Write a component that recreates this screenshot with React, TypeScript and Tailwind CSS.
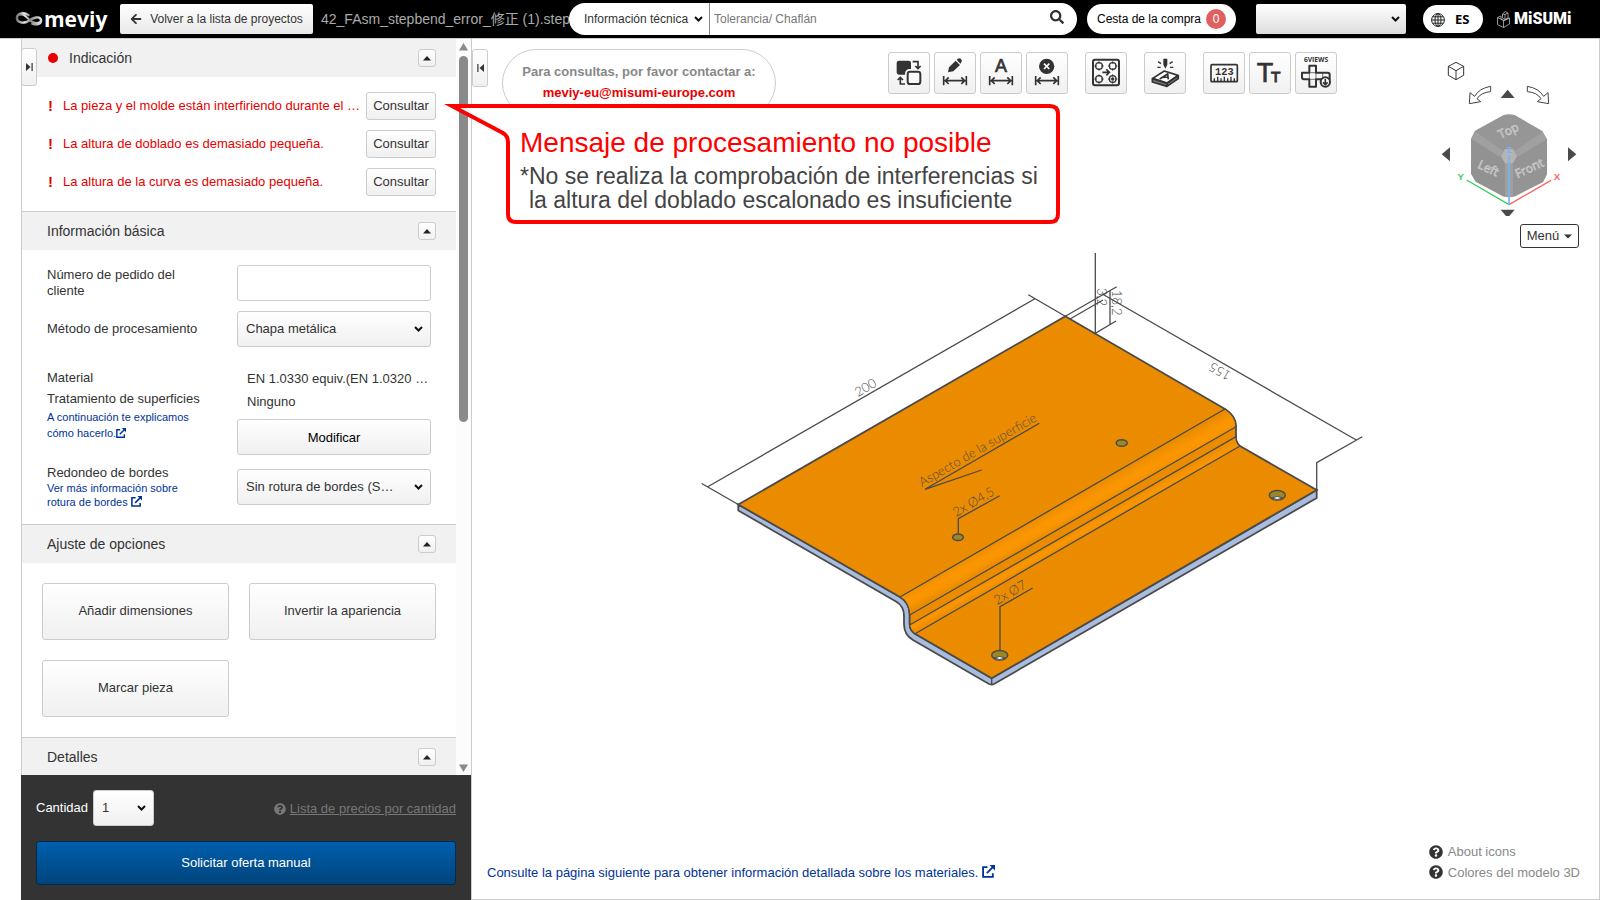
import type { ReactNode } from 'react';
import { FaArrowLeft, FaQuestionCircle, FaSearch } from 'react-icons/fa';

const buttonFace = 'rounded-[3px] border border-[#ccc] bg-linear-to-b from-white to-[#f0f0f0]';

const errors = [
  'La pieza y el molde están interfiriendo durante el …',
  'La altura de doblado es demasiado pequeña.',
  'La altura de la curva es demasiado pequeña.',
];

export default function App() {
  return (
    <div className="relative flex h-screen flex-col overflow-hidden bg-white font-['Liberation_Sans','Noto_Sans_CJK_JP',sans-serif] text-[13px] text-[#333]">
      <Header />
      <div className="flex min-h-0 flex-1 pl-[21px]">
        <Sidebar />
        <Viewer />
      </div>
      <Callout />
    </div>
  );
}

function Header() {
  return (
    <header className="flex h-[39px] shrink-0 items-center border-b border-[#ccc] bg-black pr-7 pl-[15px] text-xs">
      <a href="#" aria-label="meviy" className="flex w-[105px] shrink-0 items-center gap-px text-white">
        <svg className="shrink-0" width="28" height="16" viewBox="0 0 29 16" fill="none">
          <defs>
            <linearGradient id="loop" x1="0" x2="1">
              <stop offset="0" stopColor="#777" />
              <stop offset="0.3" stopColor="#eee" />
              <stop offset="0.55" stopColor="#888" />
              <stop offset="1" stopColor="#ddd" />
            </linearGradient>
          </defs>
          <path d="M14 4 C10 1 2 1 2 7 C2 12 9 13 14 10 C18 7 26 4 27 9 C27 14 22 14 18 13" stroke="url(#loop)" strokeWidth="2.500" strokeLinecap="round" />
          <path d="M4 4 C9 2 12 6 15 9 C18 12 23 13 26 11" stroke="url(#loop)" strokeWidth="2" />
        </svg>
        <span className="font-['Open_Sans',sans-serif] text-[21px] leading-6 font-bold">meviy</span>
      </a>
      <button className="flex h-[30px] w-[193px] shrink-0 items-center justify-center gap-2 rounded-xs bg-linear-to-b from-white to-[#e8e8e8]">
        <FaArrowLeft size={12} />
        Volver a la lista de proyectos
      </button>
      <h1 className="ml-2 w-[248px] shrink-0 overflow-hidden text-[14px] whitespace-nowrap text-[#aaa]">42_FAsm_stepbend_error_修正 (1).step</h1>
      <form className="flex h-8 min-w-0 flex-1 items-center rounded-full bg-white">
        <div className="relative flex h-full w-[141px] shrink-0 items-center border-r border-[#888]">
          <select aria-label="Categoría" className="h-full w-full appearance-none rounded-l-full bg-transparent pl-[15px] outline-none">
            <option>Información técnica</option>
          </select>
          <Chevron className="right-[6px]" />
        </div>
        <input aria-label="Buscar" placeholder="Tolerancia/ Chaflán" className="h-full min-w-0 flex-1 pl-1 outline-none placeholder:text-[#777]" />
        <button type="button" aria-label="Buscar" className="mr-3 mb-1 p-px">
          <FaSearch size={14} />
        </button>
      </form>
      <button className="ml-[10px] flex h-[30px] w-[149px] shrink-0 items-center justify-center gap-[5px] rounded-full bg-white text-black">
        Cesta de la compra
        <span className="flex size-5 items-center justify-center rounded-full bg-[#e06060] text-white">0</span>
      </button>
      <div className="relative ml-5 flex h-[30px] w-[150px] shrink-0 items-center rounded-xs bg-linear-to-b from-white to-[#ddd]">
        <select aria-label="Usuario" className="h-full w-full appearance-none bg-transparent outline-none">
          <option></option>
        </select>
        <Chevron className="right-[6px]" />
      </div>
      <button className="ml-[17px] flex h-7 w-[60px] shrink-0 items-center gap-[10px] rounded-full bg-white pt-px pl-2 font-['Open_Sans',sans-serif] text-[13px] font-bold text-black">
        <svg width="14" height="14" viewBox="0 0 14 14" fill="none" stroke="#222">
          <circle cx="7" cy="7" r="6.4" />
          <ellipse cx="7" cy="7" rx="3" ry="6.4" />
          <path d="M7 .6v12.8M.6 7h12.8M1.6 3.8h10.8M1.6 10.2h10.8" />
        </svg>
        ES
      </button>
      <a href="#" aria-label="MiSUMi" className="ml-[14px] flex w-[75px] shrink-0 items-center gap-1 text-white">
        <svg className="shrink-0" width="13" height="17" viewBox="0 0 13 17" fill="none" stroke="#bbb" strokeWidth="0.8">
          <path d="M.5 6.5 4 5v3l3 1.5 5.5-2.5v6L6.500 16.500.5 13.500zM.5 6.500l6 3v7M6.500 9.500 12.500 7M5.500 3 8.500.5l2.500 1.500v5L8 8.500V3.500L11 2M5.500 3v4L8 8.500M5.500 3 8 3.500" />
        </svg>
        <span className="font-[Roboto,sans-serif] text-[16px] leading-5 font-black">MiSUMi</span>
      </a>
    </header>
  );
}

function Sidebar() {
  return (
    <aside className="flex w-[450px] shrink-0 flex-col">
      <div className="relative flex min-h-0 flex-1 overflow-hidden border-l border-[#ccc]">
        <button aria-label="Ocultar panel" className={`${buttonFace} absolute top-[9px] -left-px flex h-[38px] w-4 items-center justify-center`}>
          <svg width="7" height="8" viewBox="0 0 7 8" fill="#333"><path d="M0 0 4.500 4 0 8zM5.500 0h1.200v8H5.500z" /></svg>
        </button>
        <div className="min-w-0 flex-1">
          <SectionTitle first>
            <span className="size-[10px] rounded-full bg-[#e60000]" />
            Indicación
          </SectionTitle>
          <ul className="flex flex-col gap-[10px] py-[15px] pr-5 pl-[26px]">
            {errors.map((message) => (
              <li key={message} className="flex h-7 items-center justify-between text-[#e60000]">
                <span className="flex items-center">
                  <span className="w-[15px] text-[15px] font-bold">!</span>
                  {message}
                </span>
                <button className={`${buttonFace} h-7 w-[70px] text-[#333]`}>Consultar</button>
              </li>
            ))}
          </ul>

          <SectionTitle>Información básica</SectionTitle>
          <div className="px-[25px] py-[15px]">
            <div className="flex h-9 items-center">
              <label htmlFor="order" className="w-[190px] shrink-0 pr-10 leading-4">Número de pedido del cliente</label>
              <input id="order" className="h-9 min-w-0 flex-1 rounded-[3px] border border-[#ccc] px-2" />
            </div>
            <div className="mt-[10px] flex h-9 items-center">
              <label htmlFor="method" className="w-[190px] shrink-0">Método de procesamiento</label>
              <Select id="method" value="Chapa metálica" />
            </div>
            <div className="mt-5 flex">
              <div className="w-[190px] shrink-0 leading-[21px]">
                <p>Material</p>
                <p>Tratamiento de superficies</p>
                <a href="#" className="block w-[150px] text-[11px] leading-4 text-[#039]">
                  A continuación te explicamos cómo hacerlo.<ExternalIcon size={10} />
                </a>
              </div>
              <div className="min-w-0 flex-1 leading-[23px]">
                <p className="pl-[10px] whitespace-nowrap">EN 1.0330 equiv.(EN 1.0320 …</p>
                <p className="pl-[10px]">Ninguno</p>
                <button className={`${buttonFace} mt-[6px] h-9 w-full text-black`}>Modificar</button>
              </div>
            </div>
            <div className="mt-[10px] flex items-center">
              <div className="w-[190px] shrink-0">
                <label htmlFor="edges" className="block leading-4">Redondeo de bordes</label>
                <a href="#" className="block w-[140px] text-[11px] leading-[14px] text-[#039]">
                  Ver más información sobre rotura de bordes <ExternalIcon size={11} />
                </a>
              </div>
              <Select id="edges" value="Sin rotura de bordes (S…" />
            </div>
          </div>

          <SectionTitle>Ajuste de opciones</SectionTitle>
          <div className="grid grid-cols-2 gap-5 p-5">
            {['Añadir dimensiones', 'Invertir la apariencia', 'Marcar pieza'].map((label) => (
              <button key={label} className={`${buttonFace} h-[57px] pb-px`}>{label}</button>
            ))}
          </div>

          <SectionTitle>Detalles</SectionTitle>
        </div>
        <div className="flex w-[15px] shrink-0 flex-col items-center bg-[#fcfcfc] pt-1 pb-[3px]">
          <svg width="9" height="8" viewBox="0 0 9 8" fill="#8a8a8a"><path d="M4.500 0 9 7.500H0z" /></svg>
          <div className="mt-[5px] h-[366px] w-[9px] rounded-full bg-[#8a8a8a]" />
          <svg className="mt-auto" width="9" height="8" viewBox="0 0 9 8" fill="#8a8a8a"><path d="M4.500 8 9 .5H0z" /></svg>
        </div>
      </div>

      <div className="bg-[#333] p-[15px] text-white">
        <div className="flex items-center">
          <label htmlFor="quantity" className="mr-[5px]">Cantidad</label>
          <div className="flex w-[61px]">
            <Select id="quantity" value="1" />
          </div>
          <a href="#" className="ml-auto flex items-center gap-1 pt-px text-[#777]">
            <FaQuestionCircle size={12} />
            <span className="underline">Lista de precios por cantidad</span>
          </a>
        </div>
        <button className="mt-[15px] block h-11 w-full rounded-[3px] border border-[#002b50] bg-linear-to-b from-[#005fae] to-[#00447c]">Solicitar oferta manual</button>
      </div>
    </aside>
  );
}

function SectionTitle({ children, first = false }: { children: ReactNode; first?: boolean }) {
  return (
    <div className={`flex items-center bg-[#f1f1f1] pr-5 text-sm ${first ? 'h-[38px] gap-[11px] pl-[26px]' : 'h-[39px] border-t border-[#ccc] pl-[25px]'}`}>
      {children}
      <button aria-label="Plegar" className={`${buttonFace} ml-auto flex size-[18px] items-center justify-center`}>
        <svg width="8" height="5" viewBox="0 0 8 5" fill="#222"><path d="M4 0 8 4.500H0z" /></svg>
      </button>
    </div>
  );
}

function Select({ id, value }: { id: string; value: string }) {
  return (
    <div className="relative flex h-9 min-w-0 flex-1 items-center">
      <select id={id} className={`${buttonFace} h-full w-full appearance-none pr-8 pl-2 text-[#333] outline-none`}>
        <option>{value}</option>
      </select>
      <Chevron className="right-2" />
    </div>
  );
}

function Chevron({ className }: { className: string }) {
  return (
    <svg className={`pointer-events-none absolute ${className}`} width="9" height="6" viewBox="0 0 9 6" fill="none" stroke="#111" strokeWidth="2">
      <path d="m1 1 3.500 3.500L8 1" />
    </svg>
  );
}

function ExternalIcon({ size }: { size: number }) {
  return (
    <svg className="inline align-[-1px]" width={size} height={size} viewBox="0 0 12 12" fill="none" stroke="#039" strokeWidth="1.700">
      <path d="M5 2H1v9h9V7.500M4.500 7.500 10.500 1.500" />
      <path d="M7 0h5v5z" fill="#039" stroke="none" />
    </svg>
  );
}

function Viewer() {
  return (
    <main className="relative min-w-0 flex-1 border-r border-b border-l border-[#ccc]">
      <Model />
      <div className="relative flex h-full flex-col justify-between">
        <div className="flex items-start">
          <button aria-label="Mostrar panel" className={`${buttonFace} mt-[10px] flex h-[38px] w-4 items-center justify-center`}>
            <svg width="7" height="8" viewBox="0 0 7 8" fill="#333"><path d="M7 0 2.500 4 7 8zM.3 0h1.200v8H.3z" /></svg>
          </button>
          <div className="mt-[10px] ml-[14px] h-[68px] w-[274px] rounded-full border border-[#ccc] pt-[11px] text-center leading-[21px] font-bold">
            <p className="text-[#888]">Para consultas, por favor contactar a:</p>
            <a href="mailto:meviy-eu@misumi-europe.com" className="text-[#e60000]">meviy-eu@misumi-europe.com</a>
          </div>
          <Toolbar />
          <ViewCube />
        </div>
        <div className="flex items-end justify-between pr-[19px] pb-[17px] pl-[15px]">
          <a href="#" className="text-[#039]">
            Consulte la página siguiente para obtener información detallada sobre los materiales. <ExternalIcon size={13} />
          </a>
          <div className="flex flex-col gap-px text-[#888]">
            <a href="#" className="flex items-center gap-[5px]"><FaQuestionCircle size={14} color="#333" />About icons</a>
            <a href="#" className="flex items-center gap-[5px]"><FaQuestionCircle size={14} color="#333" />Colores del modelo 3D</a>
          </div>
        </div>
      </div>
    </main>
  );
}

function Tool({ label, children, gap = false }: { label: string; children: ReactNode; gap?: boolean }) {
  return (
    <button aria-label={label} className={`${buttonFace} size-[42px] ${gap ? 'ml-[13px]' : ''}`}>
      <svg width="40" height="40" viewBox="3 3 120 120" fill="none" stroke="#333" strokeWidth="6">{children}</svg>
    </button>
  );
}

function DimensionArrow() {
  return <path d="M29 72v28M97 72v28M34 86h58M44 76 34 86l10 10M82 76l10 10-10 10" strokeWidth="5" />;
}

function Toolbar() {
  return (
    <div className="mt-[13px] ml-[112px] flex gap-1">
      <Tool label="Cambiar visualización">
        <rect x="26" y="26" width="43" height="42" rx="7" fill="#333" stroke="none" />
        <rect x="58" y="58" width="40" height="39" rx="7" stroke="#f8f8f8" strokeWidth="14" />
        <rect x="59" y="59" width="38" height="37" rx="7" fill="#fafafa" />
        <path d="M74 29h16v20M82 42l8 8 8-8M51 96H37V77M29 84l8-8 8 8" strokeWidth="5" />
      </Tool>
      <Tool label="Editar dimensión">
        <path d="m42 61 3-15 20-20 13 13-20 19zM68 23l4-3q5-3 9 1 5 5 1 10l-3 4z" fill="#333" stroke="none" />
        <DimensionArrow />
      </Tool>
      <Tool label="Texto de dimensión">
        <text x="63" y="60" textAnchor="middle" fontSize="54" fill="#333" strokeWidth="2" className="font-['Liberation_Sans',sans-serif]">A</text>
        <DimensionArrow />
      </Tool>
      <Tool label="Eliminar dimensión">
        <circle cx="62" cy="43" r="23" fill="#333" stroke="none" />
        <path d="m54 35 16 16M70 35 54 51" stroke="#fff" strokeWidth="5" />
        <DimensionArrow />
      </Tool>
      <Tool label="Agrupar agujeros" gap>
        <rect x="24" y="23" width="78" height="77" rx="6" />
        {[[42, 42], [83, 42], [42, 81], [83, 81]].map(([x, y]) => (
          <g key={`${x}-${y}`} strokeWidth="4">
            <circle cx={x} cy={y} r="10" />
            <path d={`M${x} ${y - 14}v7M${x} ${y + 7}v7M${x - 14} ${y}h7M${x + 7} ${y}h7`} strokeWidth="3" />
          </g>
        ))}
        <circle cx="83" cy="81" r="5" fill="#333" stroke="none" />
        <path d="M52 61h20M64 52l9 9-9 9" strokeWidth="5" />
      </Tool>
      <Tool label="Marcado láser" gap>
        <path d="m26 79 35-22 41 13-33 23z" fill="#fff" strokeLinejoin="round" strokeWidth="5" />
        <path d="m25 80 44 14v9L25 90zM69 94l34-23v9l-34 23z" fill="#777" strokeLinejoin="round" strokeWidth="5" />
        <path d="m47 81 24-15 2 16M56 76l16-1" strokeWidth="5" />
        <path d="M58 20h12v18l-6 12-6-12z" fill="#333" stroke="none" />
        <path d="m42 29 9 6M40 46h10M86 29l-9 6M88 46H78" strokeWidth="4" />
      </Tool>
      <Tool label="Medir" gap>
        <rect x="24" y="38" width="79" height="51" rx="3" strokeWidth="5" />
        <path d="M34 89V79M44 89V74M54 89V79M64 89V74M74 89V79M84 89V74M94 89V79" strokeWidth="4" />
        <text x="64" y="69" textAnchor="middle" fontSize="31" fontWeight="700" fill="#333" stroke="none" className="font-['Liberation_Mono',monospace]">123</text>
      </Tool>
      <Tool label="Texto">
        <text x="23" y="90" fontSize="81" fill="#333" strokeWidth="2" className="font-['Liberation_Sans',sans-serif]">T</text>
        <text x="66" y="90" fontSize="46" fill="#333" strokeWidth="3" className="font-['Liberation_Sans',sans-serif]">T</text>
      </Tool>
      <Tool label="Exportar vistas">
        <text x="63" y="31" textAnchor="middle" fontSize="20" fontWeight="700" fill="#333" stroke="none" className="font-['Open_Sans',sans-serif]">6VIEWS</text>
        <path d="M43 41h20v21h35q6 0 6 6v14H63v22H43V82H27q-6 0-6-6V62h22z" strokeLinejoin="round" />
        <path d="M43 62h20v20H43zM83 62v18" strokeWidth="2" />
        <circle cx="91" cy="90" r="14" fill="#fff" />
        <path d="M91 81v16M84 91l7 7 7-7" strokeWidth="5" />
      </Tool>
    </div>
  );
}

function ViewCube() {
  return (
    <div className="mt-[15px] ml-auto flex w-[165px] flex-col items-end pr-5">
      {/* View orientation widget, 3 units per pixel */}
      <svg width="145" height="162" viewBox="42 12 435 486" fill="none">
        <path d="m108 37 23 12v27l-23 13-23-13V49zM85 49l23 13 23-13M108 62v27" stroke="#333" strokeWidth="3" />
        <path d="M212 109q-35 6-48 30l-14-11-2 33 34-6-11-9q12-19 41-21zM322 109q35 6 49 30l13-11 2 33-34-6 11-9q-12-19-41-21z" stroke="#444" strokeWidth="3" />
        <g fill="#4a4a4a">
          <path d="m263 119 21 25h-42zM263 504l21-25h-42zM65 313l25-21v42zM469 313l-25-21v42z" />
        </g>
        <path d="M251 195q16-5 33 0l83 48 14 25v104l-12 24-83 43q-19 6-38 0l-82-45-13-22V266l12-24z" fill="#969696" />
        <path d="m155 268 12-23 84 59-12 16zM380 268l-13-23-84 59 12 16zM255 338h24v102h-24z" fill="#a0a0a0" />
        <path d="m155 268 84 52 16 20v100l-87-44-13-24z" fill="#929292" />
        <path d="m381 268-86 52-16 20v99l90-43 12-24z" fill="#949494" />
        <path d="m255 297h24l12 21-12 22h-24l-12-22z" fill="#b4b4b4" />
        <g className="font-['Open_Sans',sans-serif]" fill="#999" stroke="#ccc" strokeWidth="2" fontWeight="400" fontSize="36" textAnchor="middle">
          <text transform="translate(270 253) rotate(-25)">Top</text>
          <text transform="translate(200 366) rotate(25)">Left</text>
          <text transform="translate(333 366) rotate(-25)">Front</text>
        </g>
        <path d="m140 390 127 74" stroke="#3ccc60" strokeWidth="4" />
        <path d="m267 464 126-73" stroke="#ff6262" strokeWidth="4" />
        <path d="M267 464V316" stroke="#78b4f4" strokeWidth="5" />
        <g className="font-['Liberation_Sans',sans-serif]" fontSize="29" fontWeight="700" textAnchor="middle">
          <text x="122" y="389" fill="#3ccc60">Y</text>
          <text x="411" y="391" fill="#ff6262">X</text>
          <text x="267" y="308" fill="#78b4f4">Z</text>
        </g>
      </svg>
      <button className="mt-2 flex h-6 w-[59px] items-center justify-center gap-[5px] rounded-[3px] border border-[#333] bg-white">
        Menú
        <svg width="8" height="5" viewBox="0 0 8 5" fill="#333"><path d="M0 .5h8L4 4.500z" /></svg>
      </button>
    </div>
  );
}

function Model() {
  return (
    <svg className="absolute inset-0 size-full" viewBox="472 39 1127 860" fill="none" stroke="#4a4a4a" strokeWidth="1.300">
      <defs>
        <linearGradient id="outerBend" gradientUnits="userSpaceOnUse" x1="1060" y1="504" x2="1070" y2="522">
          <stop offset="0" stopColor="#eb8c00" />
          <stop offset="0.500" stopColor="#fb9600" />
          <stop offset="0.750" stopColor="#f99500" />
          <stop offset="1" stopColor="#eb8c00" />
        </linearGradient>
        <linearGradient id="innerBend" gradientUnits="userSpaceOnUse" x1="1072" y1="531" x2="1077" y2="540">
          <stop offset="0" stopColor="#ee8e00" />
          <stop offset="0.600" stopColor="#fb9600" />
          <stop offset="1" stopColor="#ee8e00" />
        </linearGradient>
      </defs>

      {/* sheet thickness */}
      <path d="M738.300 504.500V510.500L896 601.500Q904 606 904 616V624Q904 635 913 640L989 684Q992 685 994 684L1316.700 498V490L991.700 678.300 915 633.700Q909.700 630 909.700 624V613Q909 602 900 597Z" fill="#a9bcdd" strokeWidth="1.800" />
      {/* top faces */}
      <path d="M738.300 504.500 1065.300 316.300 1225 409Q1236 416 1236 426V437Q1236 443 1240 446L1316.700 490 991.700 678.300 915 633.700Q909.700 630 909.700 624V613Q909 602 900 597Z" fill="#eb8c00" strokeWidth="1.800" />
      <path d="M900 597 1225 409Q1236 416 1236 426.700L909.700 615Q909 602 900 597Z" fill="url(#outerBend)" />
      <path d="M909.700 625 1236 436.700Q1236 443 1240 446L915 633.700Q909.700 630 909.700 625Z" fill="url(#innerBend)" />
      <path d="M991.700 678.300V684.500" />

      <g fill="#9c8726" strokeWidth="1.500">
        <ellipse cx="1121.700" cy="443" rx="5.500" ry="3.300" />
        <ellipse cx="958" cy="537.300" rx="5.300" ry="3.300" />
        <ellipse cx="1277.300" cy="495.300" rx="8" ry="4.800" />
        <ellipse cx="999.700" cy="655.300" rx="8" ry="4.800" />
      </g>
      <g fill="#fff" stroke="#4a4a4a" strokeWidth="1">
        <path d="M1271.500 498Q1277 495 1283 498 1277 501 1271.500 498ZM994 658Q999.500 655 1005.500 658 999.500 661 994 658Z" />
      </g>

      {/* dimension and leader lines */}
      <path d="M701.700 483.500 738.300 504.500M707.300 487 1035 298.700M1028.300 294.700 1065.300 316.300" />
      <path d="M1065.300 316.300 1116.700 286.700M1070 319 1103 300M1095.300 253V333.300L1116 321M1110 290V324.300" />
      <path d="M1102.700 294.300 1356.700 440.300M1316.700 490V462.700L1362.300 436.700" />
      <path d="M1039.300 423.300 925 489.300 981.700 470M958.300 534V518.700L999.700 495.700M1000 650.700V606.700L1032.700 588" />

      <g fill="#4a4a4a" stroke="none" fontSize="13" fontWeight="300" className="font-[Lato,sans-serif]">
        <text transform="translate(858 397) rotate(-30)">200</text>
        <text transform="translate(1232 373) rotate(210)">155</text>
        <text transform="translate(1112 290) rotate(90)">18,2</text>
        <text transform="translate(1097 288) rotate(90)">3,2</text>
        <text transform="translate(922 487) rotate(-30)">Aspecto de la superficie</text>
        <text transform="translate(956 517) rotate(-30)">2x Ø4,5</text>
        <text transform="translate(997 605) rotate(-30)">2x Ø7</text>
      </g>
    </svg>
  );
}

function Callout() {
  return (
    <div className="absolute top-[100px] left-[440px] h-[126px] w-[624px] pt-[25px] pl-20 text-[#444]">
      <svg className="absolute inset-0" width="624" height="126" viewBox="0 0 624 126" fill="#fff" stroke="#f00" strokeWidth="4" strokeMiterlimit="10">
        <path d="M12 6H610Q618 6 618 14V114Q618 122 610 122H76Q68 122 68 114V42Q68 36 63 33Z" />
      </svg>
      <p className="relative mb-[3px] text-[28px] leading-9 text-[#f00]">Mensaje de procesamiento no posible</p>
      <p className="relative text-[23px] leading-6 whitespace-nowrap">*No se realiza la comprobación de interferencias si</p>
      <p className="relative pl-[9px] text-[23px] leading-6 whitespace-nowrap">la altura del doblado escalonado es insuficiente</p>
    </div>
  );
}
